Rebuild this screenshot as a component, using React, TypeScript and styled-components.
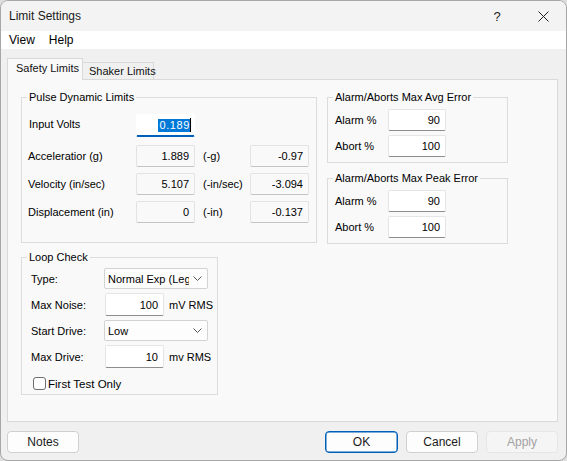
import React from "react";
import styled, { createGlobalStyle } from "styled-components";

const GlobalStyle = createGlobalStyle`
  html, body {
    margin: 0;
    padding: 0;
    background: #dedede;
  }
  body {
    font-family: "Liberation Sans", Arial, sans-serif;
    font-size: 11px;
    color: #000;
  }
`;

const Window = styled.div`
  width: 567px;
  height: 461px;
  box-sizing: border-box;
  border: 1px solid #a7a7a7;
  border-radius: 8px;
  overflow: hidden;
  background: #f0f0f0;
  display: flex;
  flex-direction: column;
`;

const TitleBar = styled.div`
  height: 30px;
  display: flex;
  align-items: center;
  background: #f3f3f3;
  padding-left: 8px;
`;

const Title = styled.div`
  flex: 1;
  font-size: 12px;
  color: #1a1a1a;
`;

const CaptionButton = styled.div`
  width: 46px;
  height: 30px;
  display: flex;
  align-items: center;
  justify-content: center;
  font-size: 13px;
  color: #222;
`;

const MenuBar = styled.div`
  height: 18px;
  background: #ffffff;
  display: flex;
  align-items: center;
  gap: 14px;
  padding-left: 8px;
  font-size: 12px;
`;

const Body = styled.div`
  flex: 1;
  display: flex;
  flex-direction: column;
  padding: 9px 8px 7px 6px;
`;

const TabStrip = styled.div`
  display: flex;
  align-items: flex-end;
  height: 22px;
  margin-bottom: -1px;
  position: relative;
  z-index: 1;
`;

const Tab = styled.div<{ $active?: boolean }>`
  box-sizing: border-box;
  height: ${(p) => (p.$active ? 22 : 18)}px;
  width: ${(p) => (p.$active ? 76 : 71)}px;
  padding: ${(p) => (p.$active ? "3px 0 0 8px" : "2px 0 0 6px")};
  border: 1px solid #d9d9d9;
  border-bottom: ${(p) => (p.$active ? "none" : "1px solid #d9d9d9")};
  border-left: ${(p) => (p.$active ? "1px solid #d9d9d9" : "none")};
  background: ${(p) => (p.$active ? "#f9f9f9" : "#f0f0f0")};
  font-size: 11px;
  white-space: nowrap;
  color: #111;
`;

const Panel = styled.div`
  height: 343px;
  box-sizing: border-box;
  border: 1px solid #d9d9d9;
  background: #f9f9f9;
  padding: 17px 0 0 13px;
  display: flex;
  gap: 10px;
`;

const Column = styled.div<{ $gap: number }>`
  display: flex;
  flex-direction: column;
  gap: ${(p) => p.$gap}px;
`;

const Group = styled.div<{ $w: number; $h: number }>`
  position: relative;
  box-sizing: border-box;
  width: ${(p) => p.$w}px;
  height: ${(p) => p.$h}px;
  border: 1px solid #dcdcdc;
`;

const Legend = styled.span`
  position: absolute;
  top: -7px;
  left: 5px;
  padding: 0 2px;
  background: #f9f9f9;
  line-height: 13px;
  white-space: nowrap;
`;

const PulseGrid = styled.div`
  display: grid;
  grid-template-columns: 108px 59px 55px 59px;
  grid-template-rows: 25px 22px 22px 22px;
  row-gap: 6px;
  align-items: center;
  padding: 16px 0 0 6px;
`;

const Label = styled.span<{ $up?: boolean; $indent?: number }>`
  white-space: nowrap;
  position: relative;
  top: ${(p) => (p.$up ? -3 : 0)}px;
  padding-left: ${(p) => p.$indent ?? 0}px;
`;

const Unit = styled.span`
  padding-left: 8px;
  white-space: nowrap;
`;

const Field = styled.div<{ $w?: number; $h?: number; $ro?: boolean }>`
  box-sizing: border-box;
  width: ${(p) => p.$w ?? 59}px;
  height: ${(p) => p.$h ?? 22}px;
  background: ${(p) => (p.$ro ? "#f9f9f9" : "#ffffff")};
  border: 1px solid ${(p) => (p.$ro ? "#e3e3e3" : "#e5e5e5")};
  border-bottom-color: ${(p) => (p.$ro ? "#c4c4c4" : "#8d8d8d")};
  border-radius: 2px;
  display: flex;
  align-items: center;
  justify-content: flex-end;
  padding-right: 5px;
  align-self: start;
`;

const FocusField = styled(Field)`
  height: 23px;
  border-color: #ffffff;
  border-bottom: 2px solid #005fb8;
  padding-right: 3px;
`;

const Selected = styled.span`
  background: #0078d7;
  color: #fff;
  letter-spacing: 0.6px;
  padding: 0 0 0 1px;
  line-height: 13px;
`;

const Caret = styled.span`
  width: 1px;
  height: 14px;
  background: #000;
`;

const SmallGrid = styled.div`
  display: grid;
  grid-template-columns: 53px 58px;
  grid-auto-rows: 22px;
  row-gap: 4px;
  align-items: center;
  padding: 11px 0 0 7px;
`;

const LoopGrid = styled.div`
  display: grid;
  grid-template-columns: 73px auto;
  row-gap: 4px;
  align-items: center;
  padding: 10px 0 0 9px;
`;

const Inline = styled.div`
  display: flex;
  align-items: center;
  gap: 5px;
  padding-left: 1px;
`;

const Select = styled.div`
  box-sizing: border-box;
  width: 104px;
  height: 21px;
  background: #fdfdfd;
  border: 1px solid #d3d3d3;
  border-radius: 2px;
  display: flex;
  align-items: center;
  gap: 4px;
  padding: 0 5px 0 3px;
`;

const SelectText = styled.span`
  flex: 1;
  overflow: hidden;
  white-space: nowrap;
  font-size: 11px;
`;

const CheckRow = styled.label`
  grid-column: 1 / 3;
  display: flex;
  align-items: center;
  gap: 2px;
  margin-top: 5px;
  padding-left: 2px;
  font-size: 11.5px;
`;

const CheckBox = styled.span`
  box-sizing: border-box;
  width: 13px;
  height: 13px;
  border: 1px solid #6e6e6e;
  border-radius: 3px;
  background: #fff;
`;

const Footer = styled.div`
  display: flex;
  gap: 8px;
  margin-top: 9px;
`;

const Spacer = styled.div`
  flex: 1;
`;

const Button = styled.div<{ $kind?: "default" | "disabled" }>`
  box-sizing: border-box;
  width: ${(p) => (p.$kind === "default" ? 73 : 72)}px;
  height: 22px;
  border-radius: 4px;
  display: flex;
  align-items: center;
  justify-content: center;
  font-size: 12px;
  background: ${(p) => (p.$kind === "disabled" ? "#f5f5f5" : "#fdfdfd")};
  color: ${(p) => (p.$kind === "disabled" ? "#a2a2a2" : "#1a1a1a")};
  border: 1px solid
    ${(p) =>
      p.$kind === "default"
        ? "#005fb8"
        : p.$kind === "disabled"
        ? "#e6e6e6"
        : "#d0d0d0"};
  box-shadow: ${(p) => (p.$kind === "default" ? "inset 0 0 0 0.5px #005fb8" : "none")};
`;

const Chevron = () => (
  <svg width="9" height="5" viewBox="0 0 9 5">
    <path d="M0.5 0.5 L4.5 4.5 L8.5 0.5" fill="none" stroke="#555" strokeWidth="1" />
  </svg>
);

const CloseIcon = () => (
  <svg width="11" height="11" viewBox="0 0 11 11">
    <path d="M0.5 0.5 L10.5 10.5 M10.5 0.5 L0.5 10.5" stroke="#222" strokeWidth="1" />
  </svg>
);

const rows = [
  { label: "Acceleratior (g)", pos: "1.889", unit: "(-g)", neg: "-0.97" },
  { label: "Velocity  (in/sec)", pos: "5.107", unit: "(-in/sec)", neg: "-3.094" },
  { label: "Displacement (in)", pos: "0", unit: "(-in)", neg: "-0.137" },
];

const ErrorGroup = ({ title, alarm, abort }: { title: string; alarm: string; abort: string }) => (
  <Group $w={181} $h={66}>
    <Legend>{title}</Legend>
    <SmallGrid>
      <Label>Alarm %</Label>
      <Field $w={58}>{alarm}</Field>
      <Label>Abort %</Label>
      <Field $w={58}>{abort}</Field>
    </SmallGrid>
  </Group>
);

export default function App() {
  return (
    <>
      <GlobalStyle />
      <Window>
        <TitleBar>
          <Title>Limit Settings</Title>
          <CaptionButton>?</CaptionButton>
          <CaptionButton>
            <CloseIcon />
          </CaptionButton>
        </TitleBar>
        <MenuBar>
          <span>View</span>
          <span>Help</span>
        </MenuBar>
        <Body>
          <TabStrip>
            <Tab $active>Safety Limits</Tab>
            <Tab>Shaker Limits</Tab>
          </TabStrip>
          <Panel>
            <Column $gap={14}>
              <Group $w={296} $h={146}>
                <Legend>Pulse Dynamic Limits</Legend>
                <PulseGrid>
                  <Label $up $indent={1}>Input Volts</Label>
                  <FocusField>
                    <Selected>0.189</Selected>
                    <Caret />
                  </FocusField>
                  <span />
                  <span />
                  {rows.map((r) => (
                    <React.Fragment key={r.label}>
                      <Label>{r.label}</Label>
                      <Field $ro>{r.pos}</Field>
                      <Unit>{r.unit}</Unit>
                      <Field $ro>{r.neg}</Field>
                    </React.Fragment>
                  ))}
                </PulseGrid>
              </Group>
              <Group $w={197} $h={138}>
                <Legend>Loop Check</Legend>
                <LoopGrid>
                  <Label>Type:</Label>
                  <Select>
                    <SelectText>Normal Exp (Legacy)</SelectText>
                    <Chevron />
                  </Select>
                  <Label>Max Noise:</Label>
                  <Inline>
                    <Field $h={23}>100</Field>
                    <span>mV RMS</span>
                  </Inline>
                  <Label>Start Drive:</Label>
                  <Select>
                    <SelectText>Low</SelectText>
                    <Chevron />
                  </Select>
                  <Label>Max Drive:</Label>
                  <Inline>
                    <Field $h={23}>10</Field>
                    <span>mv RMS</span>
                  </Inline>
                  <CheckRow>
                    <CheckBox />
                    First Test Only
                  </CheckRow>
                </LoopGrid>
              </Group>
            </Column>
            <Column $gap={15}>
              <ErrorGroup title="Alarm/Aborts Max Avg Error" alarm="90" abort="100" />
              <ErrorGroup title="Alarm/Aborts Max Peak Error" alarm="90" abort="100" />
            </Column>
          </Panel>
          <Footer>
            <Button>Notes</Button>
            <Spacer />
            <Button $kind="default">OK</Button>
            <Button>Cancel</Button>
            <Button $kind="disabled">Apply</Button>
          </Footer>
        </Body>
      </Window>
    </>
  );
}
